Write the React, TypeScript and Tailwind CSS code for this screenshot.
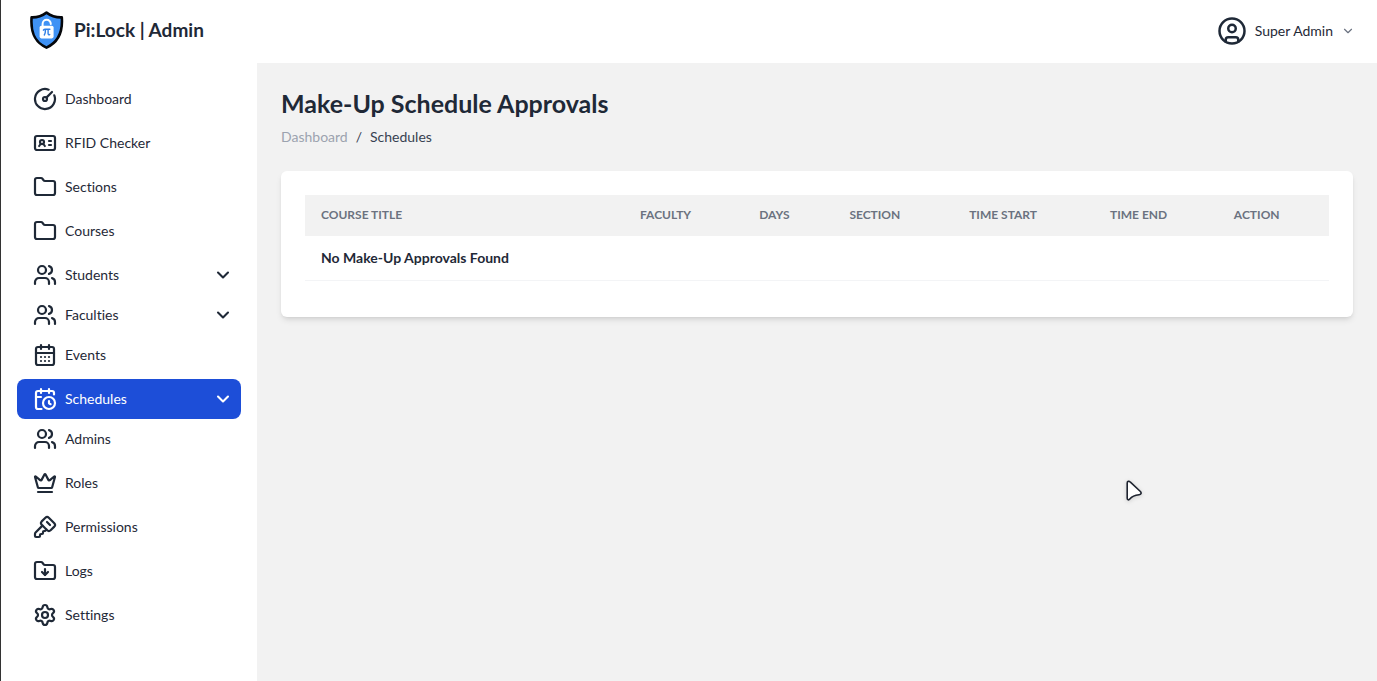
import {
  CalendarClock,
  CalendarDays,
  ChevronDown,
  CircleGauge,
  CircleUser,
  Crown,
  Folder,
  FolderDown,
  IdCard,
  KeySquare,
  Settings,
  Users,
  type LucideIcon,
} from 'lucide-react';
import { clsx } from 'clsx';

type NavItem = {
  label: string;
  icon: LucideIcon;
  expandable?: boolean;
  active?: boolean;
};

const navItems: NavItem[] = [
  { label: 'Dashboard', icon: CircleGauge },
  { label: 'RFID Checker', icon: IdCard },
  { label: 'Sections', icon: Folder },
  { label: 'Courses', icon: Folder },
  { label: 'Students', icon: Users, expandable: true },
  { label: 'Faculties', icon: Users, expandable: true },
  { label: 'Events', icon: CalendarDays },
  { label: 'Schedules', icon: CalendarClock, expandable: true, active: true },
  { label: 'Admins', icon: Users },
  { label: 'Roles', icon: Crown },
  { label: 'Permissions', icon: KeySquare },
  { label: 'Logs', icon: FolderDown },
  { label: 'Settings', icon: Settings },
];

const columns = [
  { label: 'Course Title', width: 'w-[31.15%]' },
  { label: 'Faculty', width: 'w-[11.65%]' },
  { label: 'Days', width: 'w-[8.8%]' },
  { label: 'Section', width: 'w-[11.7%]' },
  { label: 'Time Start', width: 'w-[13.75%]' },
  { label: 'Time End', width: 'w-[12.1%]' },
  { label: 'Action', width: 'w-[10.85%]' },
];

function ShieldLogo() {
  return (
    <svg viewBox="0 0 36 40" className="h-10 w-9" aria-hidden="true">
      <path
        d="M17.5 1.6C13.500 4.600 8.200 6.600 2.600 6.400C1.600 19.500 4.200 30.600 17.500 36.600C30.800 30.600 33.800 19.500 32.800 6.400C27 6.600 21.500 4.600 17.500 1.600Z"
        fill="#3f92f5"
        stroke="#05070b"
        strokeWidth="2.6"
        strokeLinejoin="round"
      />
      <path
        d="M13.600 15.500v-2.600a4.100 4.100 0 0 1 8.200 0"
        fill="none"
        stroke="#fff"
        strokeWidth="2"
        strokeLinecap="round"
      />
      <rect x="10.600" y="14.800" width="14" height="12.600" rx="1.800" fill="#fff" />
      <path
        d="M14.400 19.200c.5-.8 1-1 1.900-1h4.600M16.500 18.400c0 2.400-.3 4.200-1.200 5.600M19.100 18.400v4.200c0 1.200.7 1.600 1.600.9"
        fill="none"
        stroke="#2f7fe6"
        strokeWidth="1.400"
        strokeLinecap="round"
      />
    </svg>
  );
}

function Header() {
  return (
    <header className="flex h-[63px] items-center justify-between bg-white pr-[22px] pb-0.5 pl-7">
      <a href="#" className="flex items-center gap-[9px] text-[19px] font-bold text-[#1f2937]">
        <ShieldLogo />
        Pi:Lock | Admin
      </a>
      <button type="button" className="flex items-center text-sm text-[#1f2937]">
        <CircleUser className="mr-2 size-[30px]" strokeWidth={2} />
        Super Admin
        <ChevronDown className="ml-2 size-3.5 text-[#6b7280]" strokeWidth={2} />
      </button>
    </header>
  );
}

function NavRow({ label, icon: Icon, expandable, active }: NavItem) {
  const rowClass = clsx(
    'flex h-10 w-full items-center gap-2 rounded-lg px-4 text-left text-sm',
    active ? 'bg-[#1d4ed8] text-white' : 'text-[#1f2937]',
  );
  if (expandable) {
    return (
      <button type="button" className={clsx(rowClass, 'pr-2')} aria-expanded={false}>
        <Icon className="size-6" strokeWidth={2.2} />
        <span className="grow">{label}</span>
        <ChevronDown className="size-5" strokeWidth={2.5} />
      </button>
    );
  }
  return (
    <a href="#" className={rowClass}>
      <Icon className="size-6" strokeWidth={2.2} />
      {label}
    </a>
  );
}

function Sidebar() {
  return (
    <nav className="w-64 shrink-0 bg-white p-4">
      <ul>
        {navItems.map((item) => (
          <li key={item.label} className={clsx(!item.expandable && 'mb-1')}>
            <NavRow {...item} />
          </li>
        ))}
      </ul>
    </nav>
  );
}

function ApprovalsTable() {
  return (
    <section className="rounded-md bg-white px-6 pt-6 pb-9 shadow-md">
      <table className="w-full table-fixed text-left">
        <thead className="bg-[#f2f2f2] text-xs text-[#6b7280] uppercase">
          <tr>
            {columns.map((column) => (
              <th key={column.label} scope="col" className={clsx('h-[41px] px-4 pb-0.5 font-bold', column.width)}>
                {column.label}
              </th>
            ))}
          </tr>
        </thead>
        <tbody>
          <tr className="border-b border-[#f3f4f6] text-sm font-bold text-[#1f2937]">
            <td colSpan={columns.length} className="h-11 px-4">
              No Make-Up Approvals Found
            </td>
          </tr>
        </tbody>
      </table>
    </section>
  );
}

function PointerCursor() {
  return (
    <svg
      viewBox="0 0 20 24"
      className="pointer-events-none absolute top-[479px] left-[1123px] h-6 w-5 drop-shadow-sm"
      aria-hidden="true"
    >
      <path
        d="M3.2 4v15.2c0 1.7 1.6 2.2 2.6.9 1.9-2.5 4.400-4 9.200-4.400 2-.2 2.800-1.500 1.400-3.200L6.400 3.200C5 1.700 3.200 2.200 3.200 4Z"
        fill="#fff"
        stroke="#1f2430"
        strokeWidth="1.6"
        strokeLinejoin="round"
      />
    </svg>
  );
}

export default function App() {
  return (
    <div className="relative flex min-h-screen flex-col border-l border-[#333] bg-[#f2f2f2] font-['Lato',sans-serif] [font-variant-ligatures:no-common-ligatures]">
      <Header />
      <div className="flex grow">
        <Sidebar />
        <main className="min-w-0 grow p-6">
          <h1 className="text-[25px] leading-8 font-bold text-[#1f2937]">Make-Up Schedule Approvals</h1>
          <nav aria-label="Breadcrumb" className="mt-2 mb-6 flex gap-2 text-sm text-[#374151]">
            <a href="#" className="text-[#9ca3af]">
              Dashboard
            </a>
            <span>/</span>
            <span>Schedules</span>
          </nav>
          <ApprovalsTable />
        </main>
      </div>
      <PointerCursor />
    </div>
  );
}
